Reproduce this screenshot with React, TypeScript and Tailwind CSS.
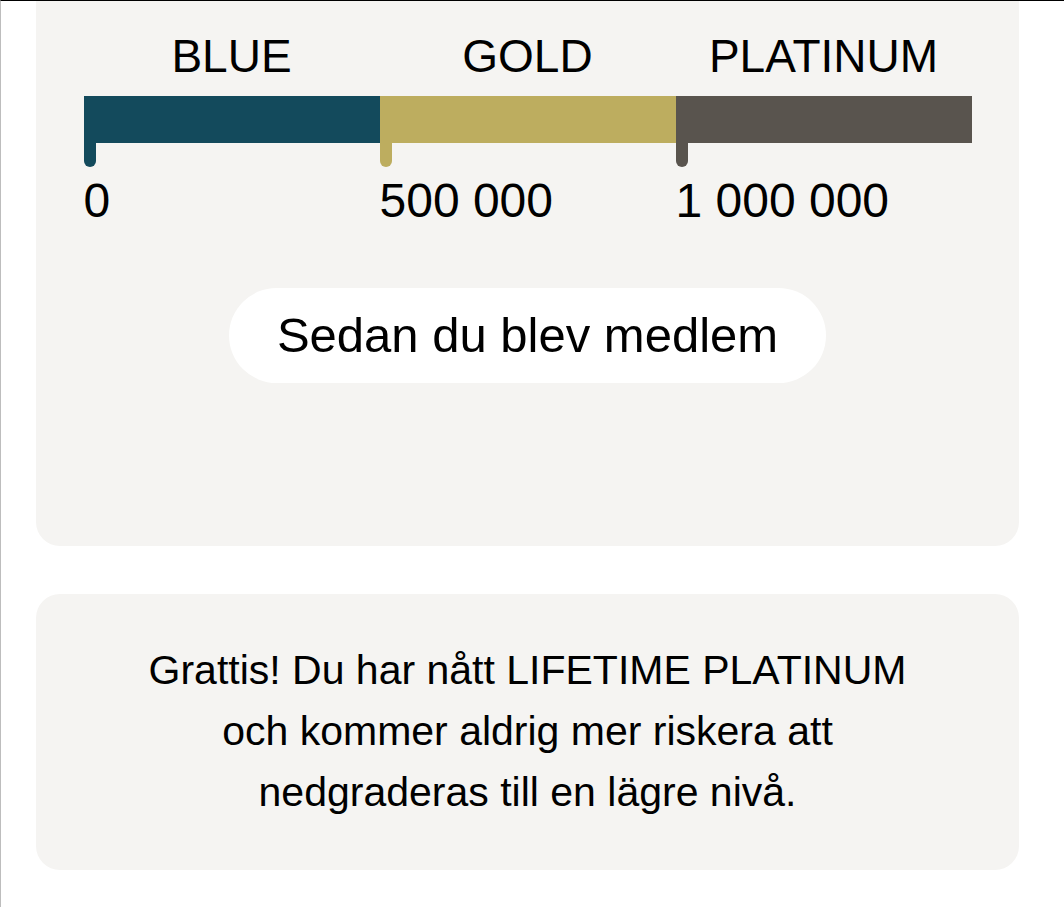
import React from "react";

/* =========================
   Tier bar
   ========================= */
type Tier = {
  name: string;
  from: string;
  bar: string;
};

const tiers: Tier[] = [
  { name: "BLUE", from: "0", bar: "bg-[#134a5c]" },
  { name: "GOLD", from: "500 000", bar: "bg-[#bdad5f]" },
  { name: "PLATINUM", from: "1 000 000", bar: "bg-[#59544e]" },
];

const TierBar: React.FC = () => {
  return (
    <div className="w-[888px]">
      {/* Labels */}
      <div className="grid grid-cols-3 mb-3">
        {tiers.map((t) => (
          <div key={t.name} className="text-center text-[46px] leading-[1.2] text-black">
            {t.name}
          </div>
        ))}
      </div>

      {/* Bar + ticks */}
      <div className="grid grid-cols-3">
        {tiers.map((t) => (
          <div key={t.name}>
            <div className={`h-[47px] ${t.bar}`} />
            <div className={`w-3 h-6 rounded-b-full ${t.bar}`} />
          </div>
        ))}
      </div>

      {/* Thresholds */}
      <div className="grid grid-cols-3 mt-[5px]">
        {tiers.map((t) => (
          <div key={t.name} className="text-[48px] leading-[1.2] text-black whitespace-nowrap">
            {t.from}
          </div>
        ))}
      </div>
    </div>
  );
};

export default function App() {
  return (
    <div
      className="min-h-[907px] bg-white border-t border-black border-l border-l-[#bdbdbd]"
      style={{ fontFamily: '"Liberation Sans", Arial, sans-serif' }}
    >
      <div className="pl-[35px] pr-[45px] flex flex-col gap-12">
        {/* Tier card */}
        <section className="bg-[#f5f4f2] rounded-b-3xl pt-[28px] pb-[163px] flex flex-col items-center">
          <TierBar />
          <div className="mt-[58px] h-[95px] px-12 rounded-full bg-white flex items-center justify-center text-[49px] text-black">
            Sedan du blev medlem
          </div>
        </section>

        {/* Lifetime card */}
        <section className="bg-[#f5f4f2] rounded-3xl pt-[46px] pb-[47px] text-center text-[41px] leading-[61px] text-black">
          Grattis! Du har nått LIFETIME PLATINUM
          <br />
          och kommer aldrig mer riskera att
          <br />
          nedgraderas till en lägre nivå.
        </section>
      </div>
    </div>
  );
}
